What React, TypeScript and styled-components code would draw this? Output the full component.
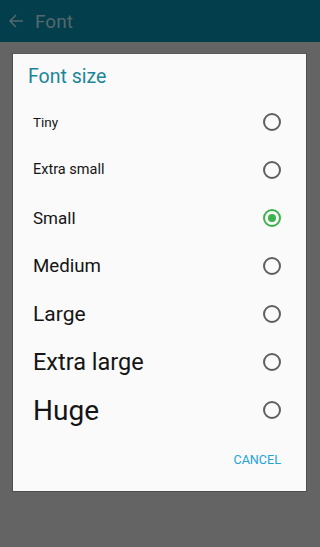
import React from "react";
import styled, { createGlobalStyle } from "styled-components";

const Global = createGlobalStyle`
  html, body { margin: 0; padding: 0; background: #646464; }
  body { font-family: Roboto, "Noto Sans", Arial, sans-serif; }
  * { box-sizing: border-box; }
`;

const Page = styled.div`
  width: 320px;
  height: 547px;
  background: #646464;
  display: flex;
  flex-direction: column;
`;

const TopBar = styled.div`
  height: 42px;
  background: #023e4b;
  display: flex;
  align-items: center;
  padding-left: 8px;
  gap: 11px;
`;

const BarTitle = styled.span`
  font-size: 19px;
  color: #55686c;
  line-height: 1;
`;

const Overlay = styled.div`
  flex: 1;
  padding: 11px 13px 0 12px;
`;

const Dialog = styled.div`
  background: #fafafa;
  border: 1px solid #4f4f4f;
  border-top-color: #585858;
  height: 439px;
  display: flex;
  flex-direction: column;
`;

const Title = styled.div`
  font-size: 19.5px;
  color: #1a8698;
  line-height: 24px;
  padding: 11px 0 0 15px;
  height: 44px;
`;

const List = styled.div`
  display: flex;
  flex-direction: column;
`;

const Row = styled.div`
  height: 48px;
  display: flex;
  align-items: center;
  justify-content: space-between;
  padding: 0 25px 0 20px;
`;

const Label = styled.span<{ $size: number }>`
  font-size: ${(p) => p.$size}px;
  color: #151515;
  line-height: 1;
  padding-top: 1px;
`;

const Radio = styled.span<{ $checked?: boolean }>`
  width: 18px;
  height: 18px;
  border-radius: 50%;
  border: 2px solid ${(p) => (p.$checked ? "#3cb34a" : "#5f5f5f")};
  display: flex;
  align-items: center;
  justify-content: center;
  &::after {
    content: "";
    width: 8px;
    height: 8px;
    border-radius: 50%;
    background: ${(p) => (p.$checked ? "#3cb34a" : "transparent")};
  }
`;

const Actions = styled.div`
  display: flex;
  justify-content: flex-end;
  padding: 7px 25px 0 0;
`;

const Button = styled.button`
  border: none;
  background: transparent;
  font-family: Roboto, Arial, sans-serif;
  font-size: 12.6px;
  color: #25a2d6;
  height: 36px;
  padding: 0;
`;

const options: { label: string; size: number; checked?: boolean }[] = [
  { label: "Tiny", size: 13.5 },
  { label: "Extra small", size: 14.5 },
  { label: "Small", size: 17, checked: true },
  { label: "Medium", size: 18.7 },
  { label: "Large", size: 21 },
  { label: "Extra large", size: 23.5 },
  { label: "Huge", size: 28 },
];

export default function App() {
  return (
    <Page>
      <Global />
      <TopBar>
        <svg width="16" height="16" viewBox="0 0 16 16">
          <path d="M15 8H2M8 2L2 8l6 6" stroke="#56686c" strokeWidth="1.5" fill="none" />
        </svg>
        <BarTitle>Font</BarTitle>
      </TopBar>
      <Overlay>
        <Dialog>
          <Title>Font size</Title>
          <List>
            {options.map((o) => (
              <Row key={o.label}>
                <Label $size={o.size}>{o.label}</Label>
                <Radio $checked={o.checked} />
              </Row>
            ))}
          </List>
          <Actions>
            <Button>CANCEL</Button>
          </Actions>
        </Dialog>
      </Overlay>
    </Page>
  );
}
